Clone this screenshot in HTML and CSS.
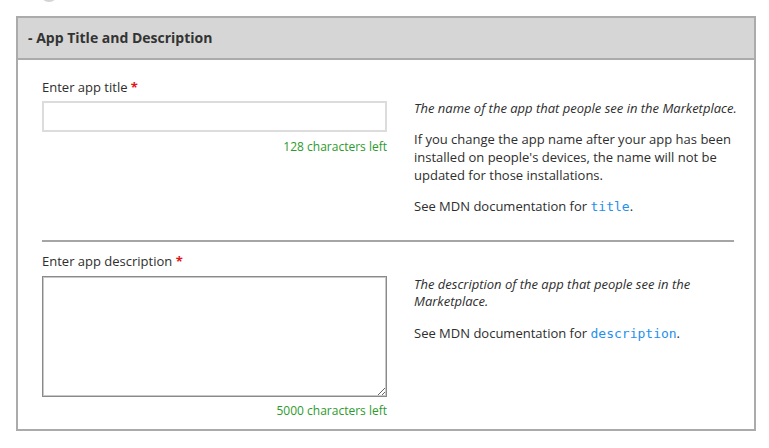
FILE: index.html
```html
<!DOCTYPE html>
<html lang="en">
<head>
<meta charset="utf-8">
<title>App Title and Description</title>
<link rel="stylesheet" href="styles.css">
</head>
<body>
<div class="top-arc"></div>
<section class="panel">
  <h2 class="panel-head">- App Title and Description</h2>
  <div class="panel-body">
    <div class="field first">
      <div class="field-main">
        <label class="field-label" for="app-title">Enter app title <span class="req">*</span></label>
        <input class="text-input" id="app-title" type="text">
        <div class="counter">128 characters left</div>
      </div>
      <div class="field-help">
        <p class="em">The name of the app that people see in the Marketplace.</p>
        <p>If you change the app name after your app has been installed on people's devices, the name will not be updated for those installations.</p>
        <p>See MDN documentation for <code class="code">title</code>.</p>
      </div>
    </div>
    <div class="field second">
      <div class="field-main">
        <label class="field-label" for="app-desc">Enter app description <span class="req">*</span></label>
        <textarea class="text-area" id="app-desc"></textarea>
        <div class="counter">5000 characters left</div>
      </div>
      <div class="field-help">
        <p class="em">The description of the app that people see in the Marketplace.</p>
        <p>See MDN documentation for <code class="code">description</code>.</p>
      </div>
    </div>
  </div>
</section>
</body>
</html>
```
FILE: styles.css
```css
html, body {
  margin: 0;
  padding: 0;
  background: #fff;
}
body {
  font-family: "Open Sans", "Liberation Sans", sans-serif;
  color: #2e2e2e;
  font-size: 13px;
  position: relative;
  padding-top: 16px;
}
.top-arc {
  position: absolute;
  left: 40px;
  top: -16px;
  width: 18px;
  height: 18px;
  border-radius: 50%;
  border-bottom: 2px solid #d4d4d4;
  box-sizing: border-box;
}
.panel {
  margin-left: 16px;
  width: 740px;
  box-sizing: border-box;
  border: 2px solid #ababab;
}
.panel-head {
  margin: 0;
  height: 40px;
  line-height: 40px;
  background: #d6d6d6;
  border-bottom: 2px solid #ababab;
  padding-left: 10px;
  font-size: 14px;
  font-weight: 700;
  color: #333;
}
.panel-body {
  padding: 0 20px 0 22px;
}
.field {
  display: flex;
  gap: 27px;
  margin-left: 2px;
}
.field.first {
  padding-top: 18px;
  padding-bottom: 24px;
  border-bottom: 2px solid #a5a5a5;
}
.field.second {
  padding-top: 10px;
  padding-bottom: 10px;
}
.field-main {
  width: 345px;
  flex: none;
  display: flex;
  flex-direction: column;
}
.field-label {
  display: block;
  line-height: 18px;
  height: 18px;
  margin-bottom: 5px;
}
.second .field-label {
  margin-bottom: 6px;
}
.req {
  color: #e2141b;
  font-weight: 700;
}
.text-input {
  display: block;
  box-sizing: border-box;
  width: 345px;
  height: 31px;
  margin: 0;
  border: 2px solid #dcdcdc;
  background: #fff;
  font: inherit;
}
.text-area {
  display: block;
  box-sizing: border-box;
  width: 345px;
  height: 121px;
  margin: 0;
  border: 1px solid #8a8a8a;
  box-shadow: inset 0 0 0 1px #c8c8c8;
  background: #fff;
  font: inherit;
}
.counter {
  align-self: flex-end;
  color: #2c9a2c;
  font-size: 12px;
  line-height: 16px;
  margin-top: 7px;
}
.second .counter {
  margin-top: 6px;
}
.field-help {
  flex: 1;
  padding-top: 21px;
  margin-right: -12px;
}
.second .field-help {
  padding-top: 24px;
}
.field-help p {
  margin: 0 0 13px;
  line-height: 18px;
}
.field-help p:last-child {
  margin-bottom: 0;
}
.second .field-help p.em {
  line-height: 17px;
  margin-bottom: 14px;
}
.em {
  font-style: italic;
}
.code {
  font-family: "DejaVu Sans Mono", "Liberation Mono", monospace;
  font-size: 13px;
  color: #2490ee;
}
```
